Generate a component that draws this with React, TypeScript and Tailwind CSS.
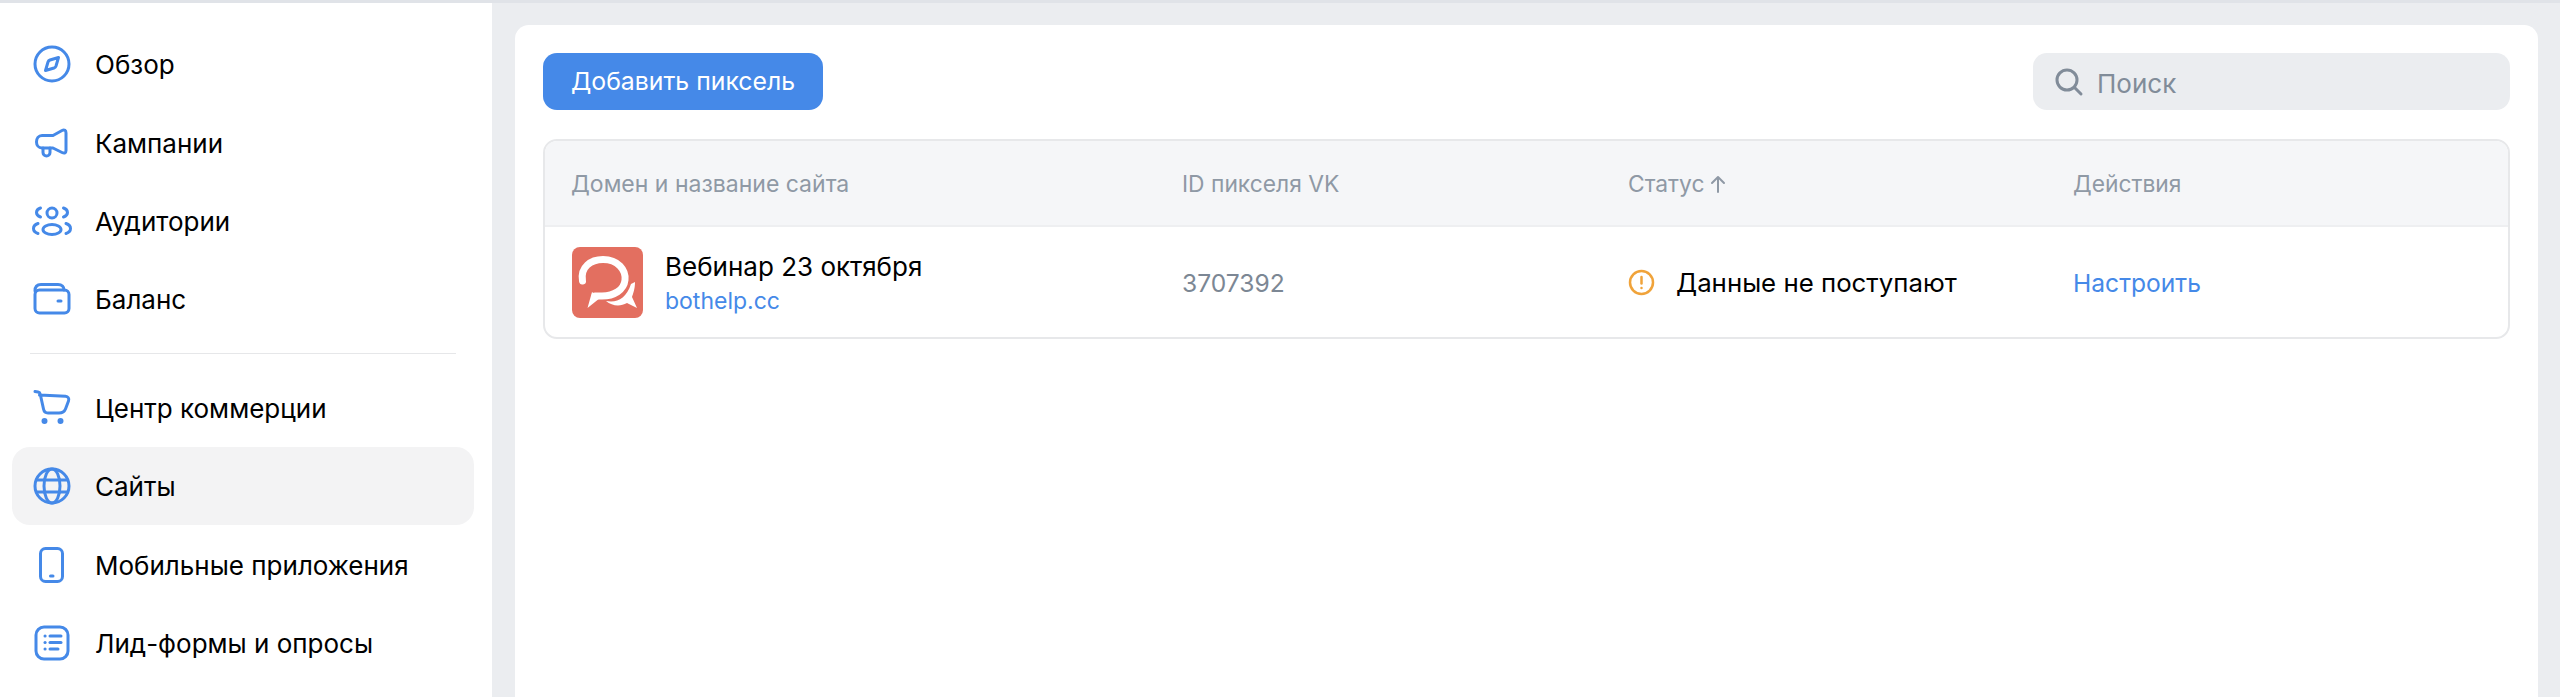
const items = [
  { label: "Обзор", icon: "compass" },
  { label: "Кампании", icon: "mega" },
  { label: "Аудитории", icon: "users" },
  { label: "Баланс", icon: "wallet" },
];
const items2 = [
  { label: "Центр коммерции", icon: "cart" },
  { label: "Сайты", icon: "globe", active: true },
  { label: "Мобильные приложения", icon: "phone" },
  { label: "Лид-формы и опросы", icon: "list" },
];

function NavIcon({ name }: { name: string }) {
  return (
    <svg width="40" height="40" viewBox="0 0 40 40" fill="none" stroke="#4589e8" strokeWidth="3" strokeLinecap="round" strokeLinejoin="round" className="shrink-0">
      {name === "compass" && (
        <>
          <circle cx="20" cy="20" r="17" />
          <path d="M26.5 13.5 L24 22 Q23.5 23.5 22 24 L13.5 26.5 L16 18 Q16.5 16.5 18 16 Z" />
        </>
      )}
      {name === "mega" && (
        <>
          <path d="M21 12.5 L30 7.5 C32.5 6.3 34 7.5 34 10 V27.5 C34 30 32.5 30.7 30 29.5 L21 25 H10 C6.5 25 4.5 22 4.5 19 C4.5 15.5 6.5 12.5 10 12.5 Z" />
          <path d="M11 25 V29.5 A3.5 3.5 0 0 0 18 29.5 V25" />
        </>
      )}
      {name === "users" && (
        <>
          <circle cx="20" cy="12" r="5" />
          <ellipse cx="20" cy="28.5" rx="9" ry="5" />
          <path d="M8.5 7 C5.5 8 4.5 10 4.5 11.5 C4.5 13 5.5 15 8.5 16" />
          <path d="M31.5 7 C34.5 8 35.5 10 35.5 11.5 C35.5 13 34.5 15 31.5 16" />
          <path d="M6 22.5 C3 23.5 1.5 26 1.5 27.5 C1.5 29.5 3 31.5 6 32.5" />
          <path d="M34 22.5 C37 23.5 38.5 26 38.5 27.5 C38.5 29.5 37 31.5 34 32.5" />
        </>
      )}
      {name === "wallet" && (
        <>
          <path d="M3 12 C3 8 5 5.5 9 5.5 H26 C30 5.5 32 8 32 11" />
          <rect x="3" y="11" width="34" height="23" rx="4.5" />
          <path d="M26 22 H29" />
        </>
      )}
      {name === "cart" && (
        <>
          <path d="M3 3.5 L6 4 C7 4.2 8 5 8.2 6 L11.5 21 C12 23.5 13.5 25 16 25 H27 C30.5 25 32.5 23.5 33.5 21 L36.5 13 C37.5 10.5 36 8.5 33.5 8.3 L7.5 7" />
          <circle cx="12.5" cy="33" r="1.5" fill="#4589e8" />
          <circle cx="28.5" cy="33" r="1.5" fill="#4589e8" />
        </>
      )}
      {name === "globe" && (
        <>
          <circle cx="20" cy="20" r="17" />
          <ellipse cx="20" cy="20" rx="8" ry="17" />
          <path d="M4.5 14 H35.5" />
          <path d="M4.5 26 H35.5" />
        </>
      )}
      {name === "phone" && (
        <>
          <rect x="8.5" y="3.5" width="22" height="33" rx="5" />
          <path d="M18.5 31 H21" />
        </>
      )}
      {name === "list" && (
        <>
          <rect x="4" y="4" width="32" height="32" rx="8" />
          <path d="M18 13 H29" />
          <path d="M18 19.5 H29" />
          <path d="M18 26 H26" />
          <path d="M13 13 H13.1" />
          <path d="M13 19.5 H13.1" />
          <path d="M13 26 H13.1" />
        </>
      )}
    </svg>
  );
}

function NavRow({ label, icon, active }: { label: string; icon: string; active?: boolean }) {
  return (
    <div className={`ml-3 mr-[18px] flex h-[78.4px] items-center gap-[23px] rounded-[18px] pl-[20px] ${active ? "bg-[#f3f3f4]" : ""}`}>
      <NavIcon name={icon} />
      <span className="pt-px text-[26px] text-black">{label}</span>
    </div>
  );
}

function Logo() {
  return (
    <svg width="71" height="71" viewBox="0 0 71 71" className="shrink-0">
      <rect width="71" height="71" rx="8" fill="#e36f60" />
      <path d="M10.5 34 C8 20 19 12.5 31 12.5 C46 12.5 54 23 53 33 C52 43 42 49 30 49 L23 49" fill="none" stroke="#fff" strokeWidth="7" strokeLinecap="round" />
      <path d="M20 45 L28 51 L15.5 61 Z" fill="#fff" />
      <path d="M34 54 C45 56 54 52 59 37 L63 35 C63 42 61 47 60 50 L65 61 L55 56 C48 60 40 59 34 54 Z" fill="#fff" />
    </svg>
  );
}

export default function App() {
  return (
    <div className="flex h-[697px] flex-col overflow-hidden bg-[#ebedf0] font-['Inter','Noto_Sans',sans-serif]">
      <div className="h-[3px] shrink-0 bg-[#e0e3e8]" />
      <div className="flex min-h-0 flex-1">
        <aside className="w-[492px] shrink-0 bg-white pt-[22px]">
          {items.map((i) => (
            <NavRow key={i.label} {...i} />
          ))}
          <div className="mr-[36px] ml-[30px] mt-[14px] mb-[15px] h-px bg-[#e6e7e9]" />
          {items2.map((i) => (
            <NavRow key={i.label} {...i} />
          ))}
        </aside>
        <main className="min-w-0 flex-1 pt-[22px] pl-[23px] pr-[22px]">
          <div className="h-[700px] rounded-[14px] bg-white px-[28px] pt-[28px]">
            <div className="flex items-center justify-between">
              <button className="flex h-[57px] w-[280px] items-center justify-center rounded-[14px] bg-[#4589e8] text-[24.8px] text-white">
                Добавить пиксель
              </button>
              <div className="flex h-[57px] w-[477px] items-center gap-[13px] rounded-[14px] bg-[#ebedf0] pl-[21px]">
                <svg width="30" height="30" viewBox="0 0 30 30" fill="none" stroke="#818c99" strokeWidth="3" strokeLinecap="round">
                  <circle cx="13" cy="13" r="10" />
                  <path d="M20.5 20.5 L27 27" />
                </svg>
                <span className="pt-[3px] text-[26px] text-[#818c99]">Поиск</span>
              </div>
            </div>
            <div className="mt-[29px] overflow-hidden rounded-[14px] border-2 border-[#e7e8ea]">
              <div className="flex h-[86px] items-center border-b-2 border-[#eeeff1] bg-[#f5f6f8] pl-[26px] pt-[2px] text-[22.8px] text-[#8f99a5]">
                <div className="w-[611px] text-[23px]">Домен и название сайта</div>
                <div className="w-[446px]">ID пикселя VK</div>
                <div className="flex w-[445px] items-center gap-[6px]">
                  Статус
                  <svg width="16" height="20" viewBox="0 0 16 20" fill="none" stroke="#8f99a5" strokeWidth="2" strokeLinecap="round" strokeLinejoin="round">
                    <path d="M8 18 V3 M2 9 L8 3 L14 9" />
                  </svg>
                </div>
                <div>Действия</div>
              </div>
              <div className="flex h-[110px] items-center pl-[27px]">
                <div className="flex w-[610px] items-center gap-[22px]">
                  <Logo />
                  <div className="flex flex-col pt-px">
                    <span className="text-[26px] leading-[36px] text-black">Вебинар 23 октября</span>
                    <span className="text-[23px] leading-[32px] text-[#4589e8]">bothelp.cc</span>
                  </div>
                </div>
                <div className="w-[446px] pt-[2px] text-[24.6px] text-[#7c8794]">3707392</div>
                <div className="flex w-[445px] items-center gap-[21px]">
                  <svg width="27" height="27" viewBox="0 0 27 27" fill="none" stroke="#f0a33a" strokeWidth="2.5" strokeLinecap="round">
                    <circle cx="13.5" cy="13.5" r="11.5" />
                    <path d="M13.5 8 V14.5" />
                    <path d="M13.5 19 V19.1" />
                  </svg>
                  <span className="pt-[2px] text-[25.8px] text-black">Данные не поступают</span>
                </div>
                <div className="pt-[2px] text-[24.6px] text-[#4589e8]">Настроить</div>
              </div>
            </div>
          </div>
        </main>
      </div>
    </div>
  );
}
